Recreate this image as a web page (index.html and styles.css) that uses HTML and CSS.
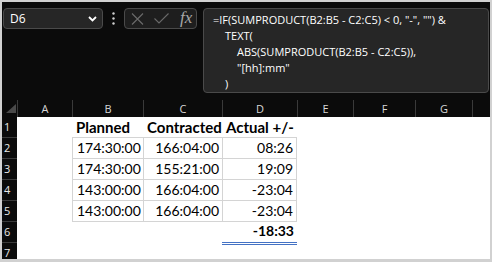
FILE: index.html
```html
<!DOCTYPE html>
<html lang="en">
<head>
    <meta charset="UTF-8">
    <title>Formula bar</title>
    <link rel="stylesheet" href="styles.css">
</head>
<body>
    <div class="window">
        <div class="toolbar">
            <div class="namebox">
                <span>D6</span>
                <svg width="9" height="6" viewBox="0 0 9 6"><path d="M1 1 L4.5 4.5 L8 1" fill="none" stroke="#fff" stroke-width="1.8"/></svg>
            </div>
            <div class="dots">
                <svg width="3" height="13" viewBox="0 0 3 13"><circle cx="1.5" cy="1.5" r="1.2" fill="#d0d0d0"/><circle cx="1.5" cy="6.5" r="1.2" fill="#d0d0d0"/><circle cx="1.5" cy="11.5" r="1.2" fill="#d0d0d0"/></svg>
            </div>
            <div class="fxbox">
                <svg width="13" height="12" viewBox="0 0 13 12"><path d="M1 0.5 L12 11.5 M12 0.5 L1 11.5" stroke="#6a6a6a" stroke-width="1.1"/></svg>
                <svg width="15" height="11" viewBox="0 0 15 11"><path d="M0.5 5.5 L5 10 L14.5 0.5" fill="none" stroke="#6a6a6a" stroke-width="1.1"/></svg>
                <span class="fx">fx</span>
            </div>
            <div class="formula">
                <div class="line">=IF(SUMPRODUCT(B2:B5 - C2:C5) &lt; 0, "-", "") &amp;</div>
                <div class="line indent1">TEXT(</div>
                <div class="line indent2">ABS(SUMPRODUCT(B2:B5 - C2:C5)),</div>
                <div class="line indent2">"[hh]:mm"</div>
                <div class="line indent1">)</div>
            </div>
        </div>

        <div class="sheet">
            <div class="row head">
                <div class="corner"><svg width="10" height="9" viewBox="0 0 10 9"><path d="M10 0 L10 9 L0 9 Z" fill="#4a4a4a"/></svg></div>
                <div class="ch">A</div>
                <div class="ch">B</div>
                <div class="ch">C</div>
                <div class="ch">D</div>
                <div class="ch">E</div>
                <div class="ch">F</div>
                <div class="ch">G</div>
                <div class="ch"></div>
            </div>
            <div class="row r1">
                <div class="rh">1</div>
                <div class="c"></div>
                <div class="c title">Planned</div>
                <div class="c title">Contracted</div>
                <div class="c title">Actual +/-</div>
                <div class="c"></div><div class="c"></div><div class="c"></div><div class="c"></div>
            </div>
            <div class="row">
                <div class="rh">2</div>
                <div class="c"></div>
                <div class="c box num">174:30:00</div>
                <div class="c box num">166:04:00</div>
                <div class="c box last num">08:26</div>
                <div class="c"></div><div class="c"></div><div class="c"></div><div class="c"></div>
            </div>
            <div class="row">
                <div class="rh">3</div>
                <div class="c"></div>
                <div class="c box num">174:30:00</div>
                <div class="c box num">155:21:00</div>
                <div class="c box last num">19:09</div>
                <div class="c"></div><div class="c"></div><div class="c"></div><div class="c"></div>
            </div>
            <div class="row">
                <div class="rh">4</div>
                <div class="c"></div>
                <div class="c box num">143:00:00</div>
                <div class="c box num">166:04:00</div>
                <div class="c box last num">-23:04</div>
                <div class="c"></div><div class="c"></div><div class="c"></div><div class="c"></div>
            </div>
            <div class="row">
                <div class="rh">5</div>
                <div class="c"></div>
                <div class="c box bottom num">143:00:00</div>
                <div class="c box bottom num">166:04:00</div>
                <div class="c box bottom last num">-23:04</div>
                <div class="c"></div><div class="c"></div><div class="c"></div><div class="c"></div>
            </div>
            <div class="row">
                <div class="rh">6</div>
                <div class="c"></div>
                <div class="c"></div>
                <div class="c"></div>
                <div class="c num total">-18:33</div>
                <div class="c"></div><div class="c"></div><div class="c"></div><div class="c"></div>
            </div>
            <div class="row r7">
                <div class="rh">7</div>
                <div class="c"></div><div class="c"></div><div class="c"></div><div class="c"></div>
                <div class="c"></div><div class="c"></div><div class="c"></div><div class="c"></div>
            </div>
        </div>
    </div>
</body>
</html>
```

FILE: styles.css
```css
body {
    margin: 0;
    background-color: #d1d1d1;
    font-family: "Open Sans", "Noto Sans", sans-serif;
}
.window {
    margin: 2px 0 0 2px;
    width: 488px;
    height: 257px;
    background-color: #0b0b0b;
    overflow: hidden;
    display: flex;
    flex-direction: column;
}
.toolbar {
    height: 97px;
    flex-shrink: 0;
    display: flex;
    align-items: flex-start;
    padding: 6px 1px 0 1px;
    box-sizing: border-box;
}
.namebox {
    width: 100px;
    height: 21px;
    box-sizing: border-box;
    border: 1px solid #4a4a4a;
    border-radius: 4px;
    background-color: #262626;
    display: flex;
    align-items: center;
    justify-content: space-between;
    padding: 0 5px 0 6px;
    color: #fff;
    font-size: 12px;
}
.dots {
    width: 21px;
    height: 21px;
    display: flex;
    align-items: center;
    justify-content: center;
}
.fxbox {
    width: 73px;
    height: 21px;
    box-sizing: border-box;
    border: 1px solid #4a4a4a;
    border-radius: 4px;
    background-color: #1e1e1e;
    display: flex;
    align-items: center;
    gap: 10px;
    padding-left: 6px;
}
.fx {
    font-family: "Liberation Serif", serif;
    font-style: italic;
    font-size: 17px;
    color: #a8a8a8;
    line-height: 1;
    margin-top: -2px;
    margin-left: 1px;
}
.formula {
    flex: 1;
    margin-left: 6px;
    height: 85px;
    box-sizing: border-box;
    border: 1px solid #4a4a4a;
    border-radius: 4px;
    background-color: #262626;
    color: #fff;
    font-size: 11px;
    padding: 3px 0 0 9px;
}
.line {
    height: 16px;
    line-height: 16px;
    white-space: nowrap;
}
.indent1 {
    padding-left: 12px;
}
.indent2 {
    padding-left: 24px;
}
.sheet {
    flex: 1;
    display: flex;
    flex-direction: column;
    background-color: #fff;
}
.row {
    display: grid;
    grid-template-columns: 15px 55px 71px 79px 75px 56px 62px 57px 1fr;
    height: 21px;
}
.row.head {
    height: 18px;
    background-color: #0b0b0b;
}
.row.r1 {
    height: 20px;
}
.row.r7 {
    height: 17px;
}
.corner {
    display: flex;
    align-items: flex-end;
    justify-content: flex-end;
    padding: 0 1px 4px 0;
}
.ch {
    border-left: 1px solid #3a3a3a;
    margin-top: 1px;
    color: #d8d8d8;
    font-size: 11px;
    text-align: center;
    line-height: 17px;
}
.rh {
    background-color: #0b0b0b;
    border-top: 1px solid #3a3a3a;
    color: #e8e8e8;
    font-size: 11px;
    padding-left: 2px;
    line-height: 20px;
}
.row.r1 .rh {
    border-top: none;
}
.c {
    color: #000;
    font-family: "Lato", "Liberation Sans", sans-serif;
    font-size: 14px;
    line-height: 20px;
    padding: 0 3px 0 4px;
    white-space: nowrap;
}
.title {
    font-weight: bold;
    font-size: 15px;
}
.box {
    border-top: 1px solid #d4d4d4;
    border-left: 1px solid #d4d4d4;
}
.box.last {
    border-right: 1px solid #d4d4d4;
}
.box.bottom {
    border-bottom: 1px solid #d4d4d4;
}
.num {
    text-align: right;
}
.total {
    font-weight: bold;
    box-shadow: 0 1px 0 #4472c4, 0 2px 0 #fff, 0 3px 0 #4472c4;
}
```
